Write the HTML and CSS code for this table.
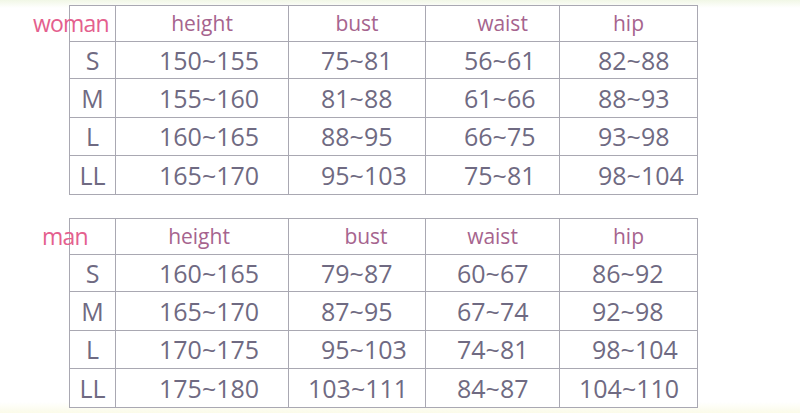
FILE: index.html
```html
<!DOCTYPE html>
<html>
<head>
<meta charset="utf-8">
<link rel="stylesheet" href="styles.css">
</head>
<body>
<div class="page">
  <table class="chart women">
    <colgroup><col class="c1"><col class="c2"><col class="c3"><col class="c4"><col class="c5"></colgroup>
    <tr class="head"><th class="size-h"><span class="label">woman</span></th><th>height</th><th>bust</th><th class="h-waist">waist</th><th>hip</th></tr>
    <tr><td class="size">S</td><td>150~155</td><td>75~81</td><td>56~61</td><td>82~88</td></tr>
    <tr><td class="size">M</td><td>155~160</td><td>81~88</td><td>61~66</td><td>88~93</td></tr>
    <tr><td class="size">L</td><td>160~165</td><td>88~95</td><td>66~75</td><td>93~98</td></tr>
    <tr><td class="size">LL</td><td>165~170</td><td>95~103</td><td>75~81</td><td>98~104</td></tr>
  </table>
  <table class="chart men">
    <colgroup><col class="c1"><col class="c2"><col class="c3"><col class="c4"><col class="c5"></colgroup>
    <tr class="head"><th class="size-h"><span class="label man">man</span></th><th class="h-height">height</th><th class="h-bust">bust</th><th>waist</th><th>hip</th></tr>
    <tr><td class="size">S</td><td>160~165</td><td>79~87</td><td>60~67</td><td>86~92</td></tr>
    <tr><td class="size">M</td><td>165~170</td><td>87~95</td><td>67~74</td><td>92~98</td></tr>
    <tr><td class="size">L</td><td>170~175</td><td>95~103</td><td>74~81</td><td>98~104</td></tr>
    <tr><td class="size">LL</td><td>175~180</td><td class="wide">103~111</td><td>84~87</td><td class="wide">104~110</td></tr>
  </table>
</div>
</body>
</html>
```
FILE: styles.css
```css
html, body {
  margin: 0;
  padding: 0;
}
body {
  width: 800px;
  height: 413px;
  overflow: hidden;
  background: linear-gradient(to bottom, #f1f7e6 0px, #ffffff 8px, #ffffff 402px, #fbfbe9 413px);
  font-family: "Open Sans", "Liberation Sans", sans-serif;
}
.page {
  padding: 5px 0 0 69px;
  display: flex;
  flex-direction: column;
  gap: 23px;
}
.chart {
  border-collapse: collapse;
  table-layout: fixed;
  width: 629px;
  background: #ffffff;
}
.chart .c1 { width: 46px; }
.chart .c2 { width: 173px; }
.chart .c3 { width: 137px; }
.chart .c4 { width: 134px; }
.chart .c5 { width: 138px; }
.chart th, .chart td {
  border: 1px solid #a9a8b2;
  padding: 0;
  white-space: nowrap;
  line-height: 1;
}
.chart th {
  font-weight: normal;
  font-size: 21px;
  color: #a6648e;
  text-align: center;
}
.chart td {
  font-size: 25px;
  color: #6f6a82;
  text-align: left;
}
.chart tr:nth-child(1) { height: 36px; }
.chart tr:nth-child(2) { height: 37px; }
.chart tr:nth-child(3) { height: 39px; }
.chart tr:nth-child(4) { height: 38px; }
.chart tr:nth-child(5) { height: 39px; }
.chart td.size {
  text-align: center;
}
.chart td:nth-child(2) { padding-left: 43px; }
.chart td:nth-child(3) { padding-left: 32px; }
.women td:nth-child(4) { padding-left: 38px; }
.women td:nth-child(5) { padding-left: 38px; }
.men td:nth-child(4) { padding-left: 31px; }
.men td:nth-child(5) { padding-left: 32px; }
.men td.wide { padding-left: 19px; }
.women .h-waist { padding-left: 20px; }
.men .h-height { padding-right: 6px; }
.men .h-bust { padding-left: 18px; }
.size-h {
  position: relative;
}
.label {
  position: absolute;
  left: -37px;
  top: 6px;
  font-size: 23px;
  letter-spacing: -0.8px;
  color: #e4608e;
}
.label.man {
  left: -28px;
}
```
